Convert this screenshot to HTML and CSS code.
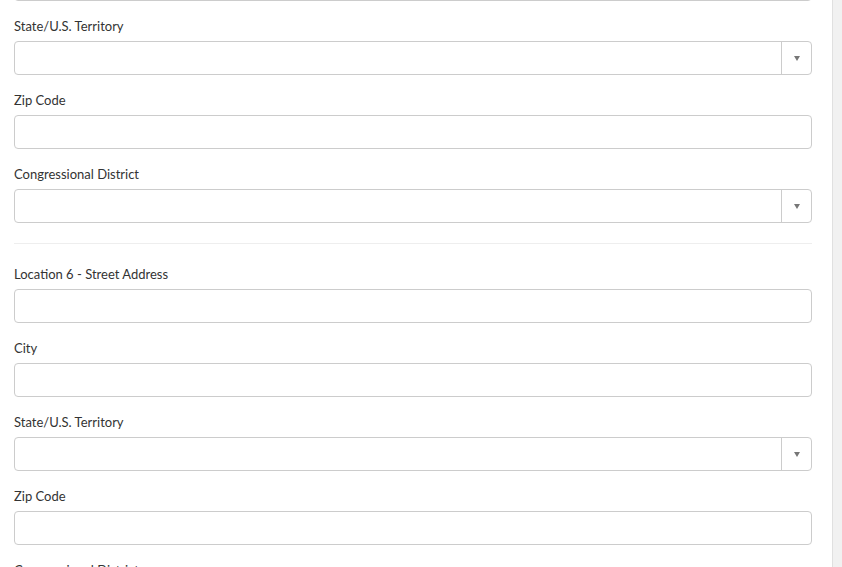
FILE: index.html
```html
<!DOCTYPE html>
<html lang="en">
<head>
    <meta charset="UTF-8">
    <meta name="viewport" content="width=device-width, initial-scale=1.0">
    <title>Locations</title>
    <link rel="stylesheet" href="styles.css">
</head>
<body>
    <div class="page">
        <div class="form">
            <div class="input input-tail"></div>

            <div class="field">
                <label>State/U.S. Territory</label>
                <div class="input select"><span class="select-value"></span><span class="select-arrow"></span></div>
            </div>
            <div class="field">
                <label>Zip Code</label>
                <div class="input"></div>
            </div>
            <div class="field">
                <label>Congressional District</label>
                <div class="input select"><span class="select-value"></span><span class="select-arrow"></span></div>
            </div>

            <hr class="divider">

            <!-- Location 6 -->
            <div class="field">
                <label>Location 6 - Street Address</label>
                <div class="input"></div>
            </div>
            <div class="field">
                <label>City</label>
                <div class="input"></div>
            </div>
            <div class="field">
                <label>State/U.S. Territory</label>
                <div class="input select"><span class="select-value"></span><span class="select-arrow"></span></div>
            </div>
            <div class="field">
                <label>Zip Code</label>
                <div class="input"></div>
            </div>
            <div class="field">
                <label>Congressional District</label>
                <div class="input select"><span class="select-value"></span><span class="select-arrow"></span></div>
            </div>
        </div>
        <div class="scrollbar"></div>
    </div>
</body>
</html>
```

FILE: styles.css
```css
body {
    margin: 0;
    padding: 0;
    background-color: #ffffff;
    font-family: 'Lato', 'Liberation Sans', sans-serif;
    color: #333333;
    overflow: hidden;
}
.page {
    display: flex;
    height: 567px;
}
.form {
    flex: 1;
    padding: 0 20px 0 14px;
}
.scrollbar {
    width: 9px;
    background-color: #f1f1f1;
    border-left: 1px solid #e0e0e0;
}
.field {
    margin-bottom: 15px;
}
.field label {
    display: block;
    font-size: 13px;
    line-height: 20px;
    margin-bottom: 5px;
}
.input {
    height: 32px;
    border: 1px solid #cccccc;
    border-radius: 4px;
    background-color: #ffffff;
}
.input-tail {
    margin-top: -33px;
    margin-bottom: 15px;
}
.select {
    display: flex;
}
.select-value {
    flex: 1;
}
.select-arrow {
    width: 29px;
    border-left: 1px solid #cccccc;
    display: flex;
    align-items: center;
    justify-content: center;
}
.select-arrow::after {
    content: "";
    border-left: 3.5px solid transparent;
    border-right: 3.5px solid transparent;
    border-top: 5px solid #777777;
    margin-top: 1px;
}
.divider {
    border: none;
    border-top: 1px solid #eeeeee;
    margin: 20px 0 20px 0;
}
```
